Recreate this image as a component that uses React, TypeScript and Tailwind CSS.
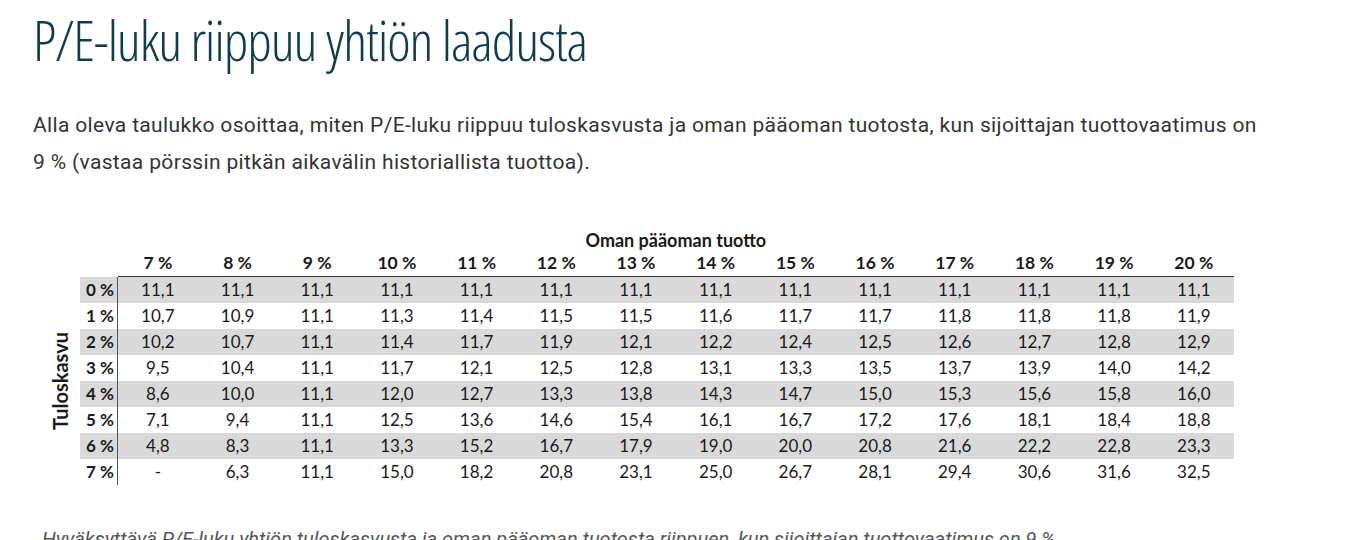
import React from 'react';

const cols = [7, 8, 9, 10, 11, 12, 13, 14, 15, 16, 17, 18, 19, 20];

const rows: { growth: number; values: string[] }[] = [
  { growth: 0, values: ['11,1', '11,1', '11,1', '11,1', '11,1', '11,1', '11,1', '11,1', '11,1', '11,1', '11,1', '11,1', '11,1', '11,1'] },
  { growth: 1, values: ['10,7', '10,9', '11,1', '11,3', '11,4', '11,5', '11,5', '11,6', '11,7', '11,7', '11,8', '11,8', '11,8', '11,9'] },
  { growth: 2, values: ['10,2', '10,7', '11,1', '11,4', '11,7', '11,9', '12,1', '12,2', '12,4', '12,5', '12,6', '12,7', '12,8', '12,9'] },
  { growth: 3, values: ['9,5', '10,4', '11,1', '11,7', '12,1', '12,5', '12,8', '13,1', '13,3', '13,5', '13,7', '13,9', '14,0', '14,2'] },
  { growth: 4, values: ['8,6', '10,0', '11,1', '12,0', '12,7', '13,3', '13,8', '14,3', '14,7', '15,0', '15,3', '15,6', '15,8', '16,0'] },
  { growth: 5, values: ['7,1', '9,4', '11,1', '12,5', '13,6', '14,6', '15,4', '16,1', '16,7', '17,2', '17,6', '18,1', '18,4', '18,8'] },
  { growth: 6, values: ['4,8', '8,3', '11,1', '13,3', '15,2', '16,7', '17,9', '19,0', '20,0', '20,8', '21,6', '22,2', '22,8', '23,3'] },
  { growth: 7, values: ['-', '6,3', '11,1', '15,0', '18,2', '20,8', '23,1', '25,0', '26,7', '28,1', '29,4', '30,6', '31,6', '32,5'] },
];

const PeTable: React.FC = () => {
  return (
    <div className="flex items-end font-['Lato',sans-serif] text-[17px] text-[#1a1a1a]">
      <div className="w-[40px] h-[208px] flex items-center justify-center">
        <span className="[writing-mode:vertical-rl] rotate-180 font-bold text-[20px] leading-none">
          Tuloskasvu
        </span>
      </div>
      <div>
        <div className="ml-[38px] h-[22px] flex items-center justify-center font-bold text-[18px]">
          Oman pääoman tuotto
        </div>
        <div className="grid grid-cols-[38px_repeat(14,79.7px)]">
          <div className="h-[26px]" />
          {cols.map((c) => (
            <div key={c} className="h-[26px] flex items-center justify-center font-bold text-[17.5px] border-b border-[#333]">
              {c} %
            </div>
          ))}
        </div>
        {rows.map((row, i) => (
          <div
            key={row.growth}
            className={`grid grid-cols-[38px_repeat(14,79.7px)] h-[26px] ${i % 2 === 0 ? 'bg-[#d9d9d9]' : 'bg-white'}`}
          >
            <div className="flex items-center justify-end pr-[3px] font-bold border-r border-[#555]">
              {row.growth} %
            </div>
            {row.values.map((v, j) => (
              <div key={j} className="flex items-center justify-center">
                {v}
              </div>
            ))}
          </div>
        ))}
      </div>
    </div>
  );
};

export default function App() {
  return (
    <div className="bg-white h-[540px] overflow-hidden pl-[33px]">
      <h1 className="pt-[11px] text-[56px] leading-[56px] font-light tracking-[-1.1px] text-[#0f3c4e] font-['Open_Sans',sans-serif] [font-stretch:condensed]">
        P/E-luku riippuu yhtiön laadusta
      </h1>
      <p className="mt-[40px] w-[1240px] text-[21px] leading-[37px] tracking-[0.35px] text-[#333] font-['Roboto',sans-serif]">
        Alla oleva taulukko osoittaa, miten P/E-luku riippuu tuloskasvusta ja oman pääoman tuotosta, kun sijoittajan tuottovaatimus on 9 % (vastaa pörssin pitkän aikavälin historiallista tuottoa).
      </p>
      <div className="mt-[48px] ml-[7px]">
        <PeTable />
      </div>
      <p className="mt-[40px] ml-[9px] italic text-[20px] leading-[28px] text-[#555] font-['Roboto',sans-serif] whitespace-nowrap">
        Hyväksyttävä P/E-luku yhtiön tuloskasvusta ja oman pääoman tuotosta riippuen, kun sijoittajan tuottovaatimus on 9 %
      </p>
    </div>
  );
}
